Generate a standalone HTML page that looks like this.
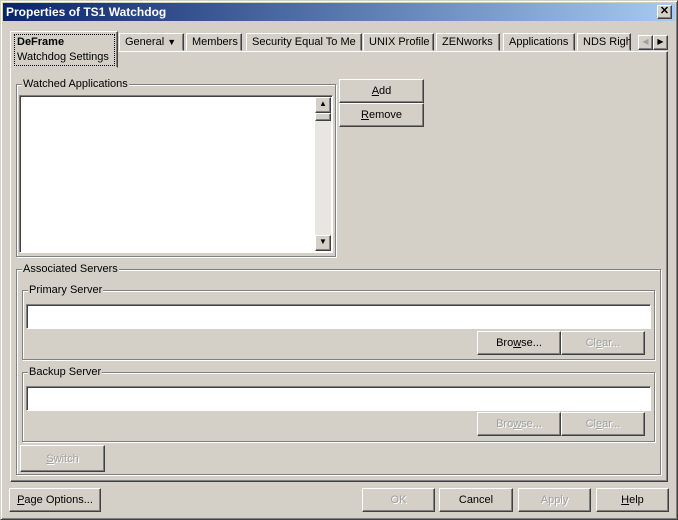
<!DOCTYPE html><html><head><style>
*{box-sizing:border-box;margin:0;padding:0}
body{width:678px;height:520px;background:#d4d0c8;font:11px "Liberation Sans",sans-serif;color:#000;position:relative;overflow:hidden}
.a{position:absolute}
.win{left:0;top:0;width:678px;height:520px;border:1px solid;border-color:#d4d0c8 #404040 #404040 #d4d0c8;box-shadow:inset 1px 1px #fff,inset -1px -1px #808080}
.title{left:3px;top:3px;width:672px;height:18px;background:linear-gradient(90deg,#0a246a,#a6caf0);color:#fff;font-weight:bold;font-size:12px;line-height:18px;padding-left:3px}
.btn{position:absolute;border:1px solid;border-color:#fff #404040 #404040 #fff;box-shadow:inset -1px -1px #808080;text-align:center;line-height:23px;background:#d4d0c8;white-space:nowrap}
.dis{color:#a0a0a0;text-shadow:1px 1px #fff}
.grp{position:absolute;border:1px solid #808080;box-shadow:1px 1px #fff,inset 1px 1px #fff}
.lbl{position:absolute;top:-8px;left:5px;background:#d4d0c8;padding:0 1px;line-height:14px;white-space:nowrap}
.field{position:absolute;background:#fff;border:1px solid;border-color:#808080 #fff #fff #808080;box-shadow:inset 1px 1px #404040}
.tab{position:absolute;top:33px;height:18px;border:1px solid;border-color:#fff #404040 transparent #fff;box-shadow:inset -1px 0 #808080;line-height:17px;padding-left:5px;white-space:nowrap;overflow:hidden}
u{text-decoration:underline}
</style></head><body>
<div class="a win"></div>
<div class="a title">Properties of TS1 Watchdog</div>
<div class="btn" style="left:657px;top:5px;width:15px;height:14px;line-height:11px;font-weight:bold;font-size:11px">✕</div>

<div class="a" style="left:10px;top:51px;width:658px;height:431px;border:1px solid;border-color:#fff #404040 #404040 #fff;box-shadow:inset -1px -1px #808080"></div>
<div class="tab" style="left:119px;width:65px">General <span style="font-size:9px">▼</span></div>
<div class="tab" style="left:186px;width:56px">Members</div>
<div class="tab" style="left:246px;width:116px">Security Equal To Me</div>
<div class="tab" style="left:363px;width:71px">UNIX Profile</div>
<div class="tab" style="left:436px;width:64px">ZENworks</div>
<div class="tab" style="left:503px;width:72px">Applications</div>
<div class="tab" style="left:577px;width:54px">NDS Rights</div>
<div class="btn" style="left:638px;top:35px;width:15px;height:15px;line-height:12px;font-size:8px;color:#a0a0a0">◀</div>
<div class="btn" style="left:653px;top:35px;width:15px;height:15px;line-height:12px;font-size:8px">▶</div>
<div class="a" style="left:10px;top:31px;width:108px;height:37px;background:#d4d0c8;border:1px solid;border-color:#fff #404040 transparent #fff;box-shadow:inset -1px 0 #808080"></div>
<div class="a" style="left:14px;top:34px;width:101px;height:32px;border:1px dotted #000;padding-left:2px;line-height:15px;white-space:nowrap"><b>DeFrame</b><br>Watchdog Settings</div>

<div class="grp" style="left:16px;top:84px;width:320px;height:173px"><span class="lbl">Watched Applications</span></div>
<div class="field" style="left:19px;top:95px;width:314px;height:158px"></div>
<div class="a" style="left:315px;top:97px;width:16px;height:154px;background:#e8e6e2"></div>
<div class="btn" style="left:315px;top:97px;width:16px;height:16px;line-height:12px;font-size:8px">▲</div>
<div class="btn" style="left:315px;top:113px;width:16px;height:8px"></div>
<div class="btn" style="left:315px;top:235px;width:16px;height:16px;line-height:12px;font-size:8px">▼</div>
<div class="btn" style="left:339px;top:79px;width:85px;height:24px"><u>A</u>dd</div>
<div class="btn" style="left:339px;top:103px;width:85px;height:24px"><u>R</u>emove</div>

<div class="grp" style="left:16px;top:269px;width:645px;height:206px"><span class="lbl">Associated Servers</span></div>
<div class="grp" style="left:22px;top:290px;width:633px;height:70px"><span class="lbl">Primary Server</span></div>
<div class="field" style="left:26px;top:304px;width:625px;height:25px"></div>
<div class="btn" style="left:477px;top:331px;width:84px;height:24px">Bro<u>w</u>se...</div>
<div class="btn dis" style="left:561px;top:331px;width:84px;height:24px">Cl<u>e</u>ar...</div>
<div class="grp" style="left:22px;top:372px;width:633px;height:70px"><span class="lbl">Backup Server</span></div>
<div class="field" style="left:26px;top:386px;width:625px;height:25px"></div>
<div class="btn dis" style="left:477px;top:412px;width:84px;height:24px">Bro<u>w</u>se...</div>
<div class="btn dis" style="left:561px;top:412px;width:84px;height:24px">Cl<u>e</u>ar...</div>
<div class="btn dis" style="left:20px;top:445px;width:85px;height:27px;line-height:26px"><u>S</u>witch</div>

<div class="btn" style="left:9px;top:488px;width:92px;height:24px"><u>P</u>age Options...</div>
<div class="btn dis" style="left:362px;top:488px;width:73px;height:24px">OK</div>
<div class="btn" style="left:439px;top:488px;width:74px;height:24px">Cancel</div>
<div class="btn dis" style="left:518px;top:488px;width:73px;height:24px">Apply</div>
<div class="btn" style="left:596px;top:488px;width:73px;height:24px"><u>H</u>elp</div>
</body></html>
